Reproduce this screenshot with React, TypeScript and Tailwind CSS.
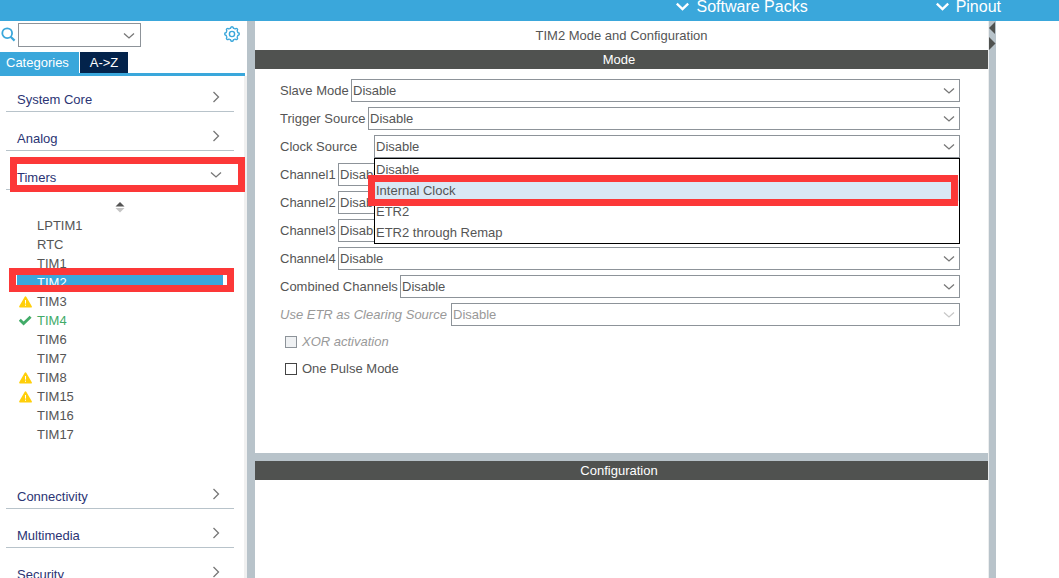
import React from "react";

function Chevron({ dir, className }: { dir: "down" | "right"; className: string }) {
  return dir === "down" ? (
    <svg width="12" height="8" viewBox="0 0 12 8" fill="none" stroke="currentColor" strokeWidth="1.3" className={className} aria-hidden="true">
      <path d="M1 1.5 L6 6 L11 1.5" />
    </svg>
  ) : (
    <svg width="8" height="12" viewBox="0 0 8 12" fill="none" stroke="currentColor" strokeWidth="1.3" className={className} aria-hidden="true">
      <path d="M1.5 1 L6.5 6 L1.5 11" />
    </svg>
  );
}

function HeaderMenu({ label }: { label: string }) {
  return (
    <button type="button" className="flex items-start gap-[7px] text-[16px] leading-[14px] whitespace-nowrap text-white">
      <svg width="13" height="12" viewBox="0 0 13 12" fill="none" stroke="currentColor" strokeWidth="2.4" aria-hidden="true">
        <path d="M0.8 3.6 L6.5 9 L12.2 3.6" />
      </svg>
      {label}
    </button>
  );
}

function GearIcon() {
  const teeth = [0, 45, 90, 135, 180, 225, 270, 315];
  return (
    <svg width="16" height="16" viewBox="0 0 16 16" fill="none" stroke="#3aa7db" aria-hidden="true">
      {teeth.map((a) => (
        <path
          key={a}
          d="M5.6 2.2 Q6.6 2.6 6.8 1.6 Q6.9 0.7 8 0.7 Q9.1 0.7 9.2 1.6 Q9.4 2.6 10.4 2.2"
          strokeWidth="1.4"
          transform={`rotate(${a} 8 8)`}
        />
      ))}
      <circle cx="8" cy="8" r="2.6" strokeWidth="1.4" />
    </svg>
  );
}

function Highlight({ className }: { className: string }) {
  return <div className={`pointer-events-none absolute z-20 border-7 border-[#fc3838] ${className}`} />;
}

function Category({ name, open, children }: { name: string; open?: boolean; children?: React.ReactNode }) {
  return (
    <section className="relative shrink-0">
      <button
        type="button"
        aria-expanded={!!open}
        className="flex h-6 w-full items-center justify-between border-b border-[#b8c3ca] pr-3 pl-[11px] text-[13px] text-[#2b3474]"
      >
        {name}
        <span className="flex w-3 justify-center pb-[5px] text-[#777]">
          <Chevron dir={open ? "down" : "right"} className="" />
        </span>
      </button>
      {open && <Highlight className="-top-[9px] -right-[11px] left-1 h-[35px]" />}
      {children}
    </section>
  );
}

type Status = "warn" | "ok" | undefined;
const timers: { name: string; status?: Status }[] = [
  { name: "LPTIM1" },
  { name: "RTC" },
  { name: "TIM1" },
  { name: "TIM2" },
  { name: "TIM3", status: "warn" },
  { name: "TIM4", status: "ok" },
  { name: "TIM6" },
  { name: "TIM7" },
  { name: "TIM8", status: "warn" },
  { name: "TIM15", status: "warn" },
  { name: "TIM16" },
  { name: "TIM17" },
];

function StatusIcon({ status }: { status: Status }) {
  if (status === "warn")
    return (
      <svg width="13" height="12" viewBox="0 0 13 12" aria-label="Warning">
        <path d="M6.5 1.2 L12 10.6 H1 Z" fill="#ffcf0a" stroke="#ffcf0a" strokeWidth="1.8" strokeLinejoin="round" />
        <path d="M6.5 4 V7.6 M6.5 8.6 V9.8" stroke="#fff" strokeWidth="1" />
      </svg>
    );
  if (status === "ok")
    return (
      <svg width="13" height="12" viewBox="0 0 13 12" fill="none" aria-label="Enabled">
        <path d="M0.8 4.8 L4.6 8.6 L11.6 1.8" stroke="#41ab68" strokeWidth="2.8" />
      </svg>
    );
  return null;
}

function TimerList() {
  return (
    <div className="pt-[11px] pb-[26px]">
      <button type="button" aria-label="Sort" className="flex h-[15px] w-full justify-center">
        <svg width="10" height="12" viewBox="0 0 10 12" aria-hidden="true">
          <path d="M5 1 L9.5 5.5 H0.5 Z" fill="#555" />
          <path d="M0.5 7 H9.5 L5 11.5 Z" fill="#c4c4c4" />
        </svg>
      </button>
      <ul className="pr-[11px] pl-[11px] text-[13px] leading-[19px]">
        {timers.map((t) => {
          const selected = t.name === "TIM2";
          const tone = selected ? "bg-[#3aa7db] text-white" : t.status === "ok" ? "text-[#41ab68]" : "text-[#555]";
          return (
            <li key={t.name} className={`relative flex h-[19px] items-center ${tone}`}>
              <span className="flex w-5 shrink-0 pl-[2px]">
                <StatusIcon status={t.status} />
              </span>
              {t.name}
              {selected && <Highlight className="-top-[5px] -right-[11px] -left-2 h-6" />}
            </li>
          );
        })}
      </ul>
    </div>
  );
}

function Sidebar() {
  return (
    <aside className="flex w-[247px] shrink-0 flex-col bg-white">
      <div className="flex h-[31px] shrink-0 items-start pt-[2px] pr-[7px]">
        <svg width="18" height="24" viewBox="0 0 18 24" fill="none" stroke="#3aa7db" strokeWidth="1.8" aria-hidden="true">
          <circle cx="7.2" cy="10.2" r="4.9" />
          <path d="M10.6 13.8 L14.6 17.6" strokeWidth="2.2" />
        </svg>
        <div className="relative">
          <select aria-label="Search" className="block h-6 w-[123px] appearance-none border border-[#8d9399] bg-white">
            <option></option>
          </select>
          <Chevron dir="down" className="pointer-events-none absolute top-[9px] right-[6px] text-[#777]" />
        </div>
        <button type="button" aria-label="Settings" className="mt-[3px] ml-auto">
          <GearIcon />
        </button>
      </div>
      <div className="mr-[2px] flex shrink-0 gap-px border-b-3 border-[#3aa7db] text-[13px] leading-[21px] text-white">
        <button type="button" className="w-[79px] bg-[#3aa7db] pl-[6px] text-left">Categories</button>
        <button type="button" className="w-12 bg-[#03234b]">A-&gt;Z</button>
      </div>
      <nav className="flex min-h-0 flex-1 flex-col gap-[15px] border-r-3 border-[#f0f0f0] pt-3 pr-[10px] pl-[6px]">
        <Category name="System Core" />
        <Category name="Analog" />
        <Category name="Timers" open>
          <TimerList />
        </Category>
        <Category name="Connectivity" />
        <Category name="Multimedia" />
        <Category name="Security" />
      </nav>
    </aside>
  );
}

const fields = [
  { id: "slave", label: "Slave Mode", width: "w-[71px]" },
  { id: "trigger", label: "Trigger Source", width: "w-[88px]" },
  { id: "clock", label: "Clock Source", width: "w-[94px]", open: true },
  { id: "ch1", label: "Channel1", width: "w-[58px]" },
  { id: "ch2", label: "Channel2", width: "w-[58px]" },
  { id: "ch3", label: "Channel3", width: "w-[58px]" },
  { id: "ch4", label: "Channel4", width: "w-[58px]" },
  { id: "combined", label: "Combined Channels", width: "w-[120px]" },
  { id: "etr", label: "Use ETR as Clearing Source", width: "w-[171px]", disabled: true },
];

const clockSources = ["Disable", "Internal Clock", "ETR2", "ETR2 through Remap"];

function Field({ id, label, width, open, disabled }: (typeof fields)[number]) {
  return (
    <div className={`flex h-[23px] items-center ${disabled ? "text-[#999]" : "text-[#555]"}`}>
      <label htmlFor={id} className={`shrink-0 whitespace-nowrap ${width} ${disabled ? "italic" : ""}`}>
        {label}
      </label>
      <div className="relative min-w-0 flex-1">
        <select
          id={id}
          disabled={disabled}
          className="block h-[23px] w-full appearance-none border border-[#8d9399] bg-white pl-px disabled:opacity-100"
        >
          {(open ? clockSources : ["Disable"]).map((o) => (
            <option key={o}>{o}</option>
          ))}
        </select>
        <Chevron
          dir="down"
          className={`pointer-events-none absolute top-2 right-[5px] ${disabled ? "text-[#c8c8c8]" : "text-[#777]"}`}
        />
        {open && (
          <div className="absolute inset-x-0 top-full z-10 border border-black bg-white">
            <ul>
              {clockSources.map((o) => (
                <li key={o} className={`h-[21px] pl-px leading-[21px] ${o === "Internal Clock" ? "bg-[#d9e8f5]" : ""}`}>
                  {o}
                </li>
              ))}
            </ul>
            <Highlight className="top-4 right-px -left-[7px] h-[31px]" />
          </div>
        )}
      </div>
    </div>
  );
}

function SectionBar({ children }: { children: string }) {
  return <h2 className="h-[19px] shrink-0 bg-[#505250] pr-[5px] text-center leading-[19px] text-white">{children}</h2>;
}

export default function App() {
  return (
    <div className="flex h-screen flex-col overflow-hidden bg-white font-['Liberation_Sans',Arial,sans-serif] text-[13px] text-[#555]">
      <header className="flex h-[21px] shrink-0 justify-end gap-[128px] bg-[#3aa7db] pr-[58px]">
        <HeaderMenu label="Software Packs" />
        <HeaderMenu label="Pinout" />
      </header>
      <div className="flex min-h-0 flex-1">
        <Sidebar />
        <div className="w-2 shrink-0 bg-[#b8c3ca]" />
        <main className="flex min-w-0 flex-1 flex-col border-r border-[#eceeef]">
          <h1 className="h-[29px] shrink-0 text-center leading-[29px]">TIM2 Mode and Configuration</h1>
          <SectionBar>Mode</SectionBar>
          <form className="flex h-[384px] shrink-0 flex-col gap-[5px] pt-[10px] pr-7 pl-[25px]">
            {fields.map((f) => (
              <Field key={f.id} {...f} />
            ))}
            <div className="flex flex-col gap-[5px] pl-[5px]">
              <label className="flex h-[22px] items-center gap-[5px] text-[#999] italic">
                <input type="checkbox" disabled className="size-3 appearance-none border border-[#8d9399] bg-[#eff1f3]" />
                XOR activation
              </label>
              <label className="flex h-[22px] items-center gap-[5px]">
                <input type="checkbox" className="size-3 appearance-none border border-[#444] bg-white" />
                One Pulse Mode
              </label>
            </div>
          </form>
          <div className="h-2 shrink-0 bg-[#b8c3ca]" />
          <SectionBar>Configuration</SectionBar>
        </main>
        <div className="w-[7px] shrink-0 bg-[#b8c3ca]">
          <svg width="7" height="30" viewBox="0 0 7 30" fill="#505250" aria-hidden="true">
            <path d="M6 1 V13 L0 7 Z" />
            <path d="M0 16 V29 L6.5 22.5 Z" />
          </svg>
        </div>
        <div className="w-[63px] shrink-0 bg-white" />
      </div>
    </div>
  );
}
